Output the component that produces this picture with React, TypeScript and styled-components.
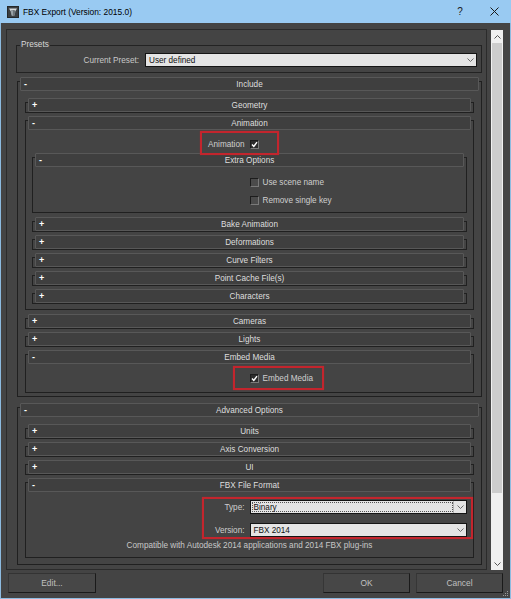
import React from 'react';
import styled, { createGlobalStyle } from 'styled-components';

const GlobalStyle = createGlobalStyle`
  * { box-sizing: border-box; }
  html, body { margin: 0; padding: 0; background: #444444; }
  body { font-family: "Liberation Sans", Arial, sans-serif; font-size: 8.2px; overflow: hidden; }
`;

const Window = styled.div`
  position: relative;
  width: 511px;
  height: 599px;
  display: flex;
  flex-direction: column;
  background: #444444;
`;

const TitleBar = styled.div`
  height: 23px;
  flex: none;
  background: #99caf2;
  display: flex;
  align-items: center;
  padding-left: 7px;
  color: #000;
  font-size: 8.4px;
`;

const TitleText = styled.span`
  margin-left: 4px;
  flex: 1;
`;

const TitleBtn = styled.div<{ $mr: number }>`
  width: 28px;
  height: 23px;
  margin-right: ${(p) => p.$mr}px;
  display: flex;
  align-items: center;
  justify-content: center;
  font-size: 10px;
  color: #1a1a1a;
`;

const Client = styled.div`
  flex: 1;
  display: flex;
  flex-direction: column;
  border: 1px solid #8dbbe0;
  border-top: none;
  padding: 6px 7px 0 5px;
`;

const MainRow = styled.div`
  display: flex;
  align-items: flex-start;
  height: 541px;
`;

const ScrollPanel = styled.div`
  width: 481px;
  height: 541px;
  border: 1px solid #2b2b2b;
  padding: 0 4px 0 9px;
  display: flex;
  flex-direction: column;
  overflow: hidden;
`;

const ScrollBar = styled.div`
  width: 12px;
  height: 540px;
  margin: 1px 0 0 4px;
  background: #f0f0f0;
  display: flex;
  flex-direction: column;
`;

const ScrollArrow = styled.div`
  height: 13px;
  flex: none;
  display: flex;
  align-items: center;
  justify-content: center;
`;

const ScrollThumb = styled.div`
  height: 450px;
  flex: none;
  margin: 0 1px;
  background: #cdcdcd;
`;

const ScrollTrack = styled.div`
  flex: 1;
`;

const ButtonRow = styled.div`
  display: flex;
  margin-top: 3px;
  height: 20px;
  padding-left: 2px;
`;

const Button = styled.div<{ $w: number; $mr?: number }>`
  width: ${(p) => p.$w}px;
  margin-right: ${(p) => p.$mr ?? 0}px;
  height: 20px;
  background: #474747;
  border: 1px solid;
  border-color: #333 #1a1a1a #1a1a1a #363636;
  color: #c0c0c0;
  display: flex;
  align-items: center;
  justify-content: center;
  font-size: 8.4px;
`;

const Spacer = styled.div`
  flex: 1;
`;

const Group = styled.div`
  margin-top: 15px;
  height: 28px;
  border: 1px solid #232323;
  display: flex;
  flex-direction: column;
  flex: none;
`;

const Legend = styled.div`
  align-self: flex-start;
  margin: -6px 0 0 3px;
  padding: 0 1px;
  height: 10px;
  line-height: 10px;
  background: #444444;
  color: #d8d8d8;
`;

const PresetRow = styled.div`
  display: flex;
  align-items: center;
  margin-top: 3px;
`;

const PresetLabel = styled.div`
  width: 122px;
  margin-right: 6px;
  text-align: right;
  color: #c8c8c8;
`;

const Combo = styled.div<{ $mr?: number }>`
  flex: 1;
  height: 14px;
  margin-right: ${(p) => p.$mr ?? 0}px;
  background: #e4e4e4;
  border: 1px solid #141414;
  display: flex;
  align-items: center;
  color: #111;
  line-height: 12px;
`;

const ComboText = styled.div<{ $focus?: boolean }>`
  flex: 1;
  height: 10px;
  margin-left: 1px;
  padding-left: 1px;
  line-height: 9px;
  border: 1px dotted ${(p) => (p.$focus ? '#555' : 'transparent')};
`;

const ComboButton = styled.div<{ $split?: boolean }>`
  width: 13px;
  height: 12px;
  display: flex;
  align-items: center;
  justify-content: center;
  border-left: 1px solid ${(p) => (p.$split ? '#b5b5b5' : 'transparent')};
`;

const RollFrame = styled.div<{ $mt: number; $ml?: number }>`
  flex: none;
  margin-top: ${(p) => 4 + p.$mt}px;
  margin-left: ${(p) => p.$ml ?? 0}px;
  border: 1px solid #202020;
  padding: 0 2px;
`;

const RollHeader = styled.div`
  margin-top: -5px;
  height: 14px;
  background: #3f3f3f;
  border: 1px solid #585858;
  border-radius: 1px;
  display: grid;
  grid-template-columns: 14px 1fr 14px;
  align-items: center;
  color: #dedede;
  line-height: 13px;
`;

const Sign = styled.span`
  padding-left: 3px;
  color: #ffffff;
  font-weight: bold;
  font-size: 9px;
`;

const HeaderTitle = styled.span`
  text-align: center;
`;

const RollBody = styled.div<{ $pad: string }>`
  display: flex;
  flex-direction: column;
  padding: ${(p) => p.$pad};
`;

const CheckRow = styled.div<{ $mt?: number }>`
  position: relative;
  display: grid;
  grid-template-columns: 1fr 1fr;
  align-items: center;
  height: 12px;
  flex: none;
  margin-top: ${(p) => p.$mt ?? 0}px;
  color: #cfcfcf;
`;

const RowLabel = styled.div`
  text-align: right;
  padding-right: 5px;
`;

const CheckCell = styled.div`
  display: flex;
  align-items: center;
  gap: 4px;
`;

const CheckBox = styled.span<{ $on?: boolean }>`
  width: 9px;
  height: 9px;
  flex: none;
  border: 1px solid;
  border-color: #1c1c1c #7a7a7a #7a7a7a #1c1c1c;
  background: ${(p) => (p.$on ? '#2c2c2c' : '#4b4b4b')};
  display: flex;
  align-items: center;
  justify-content: center;
`;

const ComboBlock = styled.div`
  position: relative;
  display: flex;
  flex-direction: column;
  gap: 9px;
`;

const ComboRow = styled.div`
  display: grid;
  grid-template-columns: 1fr 1fr;
  align-items: center;
  color: #cfcfcf;
`;

const Note = styled.div`
  margin-top: 3px;
  height: 11px;
  line-height: 11px;
  text-align: center;
  color: #c8c8c8;
`;

const Highlight = styled.div<{ $l: string; $t: number; $w?: number; $h?: number; $r?: number; $b?: number }>`
  position: absolute;
  left: ${(p) => p.$l};
  top: ${(p) => p.$t}px;
  ${(p) => (p.$w !== undefined ? `width: ${p.$w}px;` : '')}
  ${(p) => (p.$h !== undefined ? `height: ${p.$h}px;` : '')}
  ${(p) => (p.$r !== undefined ? `right: ${p.$r}px;` : '')}
  ${(p) => (p.$b !== undefined ? `bottom: ${p.$b}px;` : '')}
  border: 2px solid #c3252d;
  box-shadow: 0 0 1px rgba(195, 37, 45, 0.6);
  pointer-events: none;
`;

const Grip = styled.div`
  position: absolute;
  right: 2px;
  bottom: 2px;
  width: 7px;
  height: 7px;
`;

const Chevron = ({ dir = 'down', color = '#6b6b6b' }: { dir?: 'up' | 'down'; color?: string }) => (
  <svg width="7" height="4" viewBox="0 0 7 4">
    <polyline
      points={dir === 'down' ? '0.5,0.5 3.5,3.5 6.5,0.5' : '0.5,3.5 3.5,0.5 6.5,3.5'}
      fill="none"
      stroke={color}
      strokeWidth="1"
    />
  </svg>
);

const Tick = () => (
  <svg width="7" height="7" viewBox="0 0 7 7">
    <polyline points="1,3.5 2.8,5.5 6,1.2" fill="none" stroke="#ffffff" strokeWidth="1.4" />
  </svg>
);

const AppIcon = () => (
  <svg width="12" height="12" viewBox="0 0 12 12">
    <rect x="0.5" y="0.5" width="11" height="11" fill="#3b3f42" stroke="#24282a" />
    <polygon points="2,2.5 10,2.5 8.5,5 6,4 3.5,5" fill="#d6dadc" />
    <polygon points="3.5,5 6,4 8.5,5 7.5,9.5 6,10 4.5,9.5" fill="#9aa2a6" />
    <polygon points="6,4 8.5,5 7.5,9.5 6,10" fill="#6c7478" />
  </svg>
);

type RollProps = {
  title: string;
  open?: boolean;
  mt?: number;
  ml?: number;
  pad?: string;
  children?: React.ReactNode;
};

function Rollout({ title, open = false, mt = 3, ml, pad = '0', children }: RollProps) {
  return (
    <RollFrame $mt={mt} $ml={ml}>
      <RollHeader>
        <Sign>{open ? '-' : '+'}</Sign>
        <HeaderTitle>{title}</HeaderTitle>
        <span />
      </RollHeader>
      {open && <RollBody $pad={pad}>{children}</RollBody>}
    </RollFrame>
  );
}

export default function App() {
  return (
    <>
      <GlobalStyle />
      <Window>
        <TitleBar>
          <AppIcon />
          <TitleText>FBX Export (Version: 2015.0)</TitleText>
          <TitleBtn $mr={6}>?</TitleBtn>
          <TitleBtn $mr={3}>
            <svg width="9" height="9" viewBox="0 0 9 9">
              <path d="M0.5 0.5 L8.5 8.5 M8.5 0.5 L0.5 8.5" stroke="#1a1a1a" strokeWidth="1" />
            </svg>
          </TitleBtn>
        </TitleBar>
        <Client>
          <MainRow>
            <ScrollPanel>
              <Group>
                <Legend>Presets</Legend>
                <PresetRow>
                  <PresetLabel>Current Preset:</PresetLabel>
                  <Combo $mr={4}>
                    <ComboText>User defined</ComboText>
                    <ComboButton>
                      <Chevron />
                    </ComboButton>
                  </Combo>
                </PresetRow>
              </Group>

              <Rollout title="Include" open mt={4} ml={1} pad="7px 5px 3px">
                <Rollout title="Geometry" mt={0} />
                <Rollout title="Animation" open pad="8px 4px 5px">
                  <CheckRow>
                    <RowLabel>Animation</RowLabel>
                    <CheckCell>
                      <CheckBox $on>
                        <Tick />
                      </CheckBox>
                    </CheckCell>
                    <Highlight $l="calc(50% - 50px)" $t={-7} $w={79} $h={24} />
                  </CheckRow>
                  <Rollout title="Extra Options" open pad="9px 0 6px">
                    <CheckRow>
                      <span />
                      <CheckCell>
                        <CheckBox />
                        Use scene name
                      </CheckCell>
                    </CheckRow>
                    <CheckRow $mt={6}>
                      <span />
                      <CheckCell>
                        <CheckBox />
                        Remove single key
                      </CheckCell>
                    </CheckRow>
                  </Rollout>
                  <Rollout title="Bake Animation" mt={4} />
                  <Rollout title="Deformations" />
                  <Rollout title="Curve Filters" />
                  <Rollout title="Point Cache File(s)" />
                  <Rollout title="Characters" />
                </Rollout>
                <Rollout title="Cameras" mt={4} />
                <Rollout title="Lights" />
                <Rollout title="Embed Media" open pad="8px 4px 8px">
                  <CheckRow>
                    <span />
                    <CheckCell>
                      <CheckBox $on>
                        <Tick />
                      </CheckBox>
                      Embed Media
                    </CheckCell>
                    <Highlight $l="calc(50% - 17px)" $t={-6} $w={91} $h={24} />
                  </CheckRow>
                </Rollout>
              </Rollout>

              <Rollout title="Advanced Options" open mt={6} ml={1} pad="7px 5px 6px">
                <Rollout title="Units" mt={0} />
                <Rollout title="Axis Conversion" />
                <Rollout title="UI" />
                <Rollout title="FBX File Format" open pad="8px 4px 6px">
                  <ComboBlock>
                    <ComboRow>
                      <RowLabel>Type:</RowLabel>
                      <Combo>
                        <ComboText $focus>Binary</ComboText>
                        <ComboButton $split>
                          <Chevron />
                        </ComboButton>
                      </Combo>
                    </ComboRow>
                    <ComboRow>
                      <RowLabel>Version:</RowLabel>
                      <Combo>
                        <ComboText>FBX 2014</ComboText>
                        <ComboButton>
                          <Chevron />
                        </ComboButton>
                      </Combo>
                    </ComboRow>
                    <Highlight $l="calc(50% - 48px)" $t={-3} $r={-6} $b={-2} />
                  </ComboBlock>
                  <Note>Compatible with Autodesk 2014 applications and 2014 FBX plug-ins</Note>
                </Rollout>
              </Rollout>
            </ScrollPanel>
            <ScrollBar>
              <ScrollArrow>
                <Chevron dir="up" color="#555" />
              </ScrollArrow>
              <ScrollThumb />
              <ScrollTrack />
              <ScrollArrow>
                <Chevron color="#555" />
              </ScrollArrow>
            </ScrollBar>
          </MainRow>
          <ButtonRow>
            <Button $w={88}>Edit...</Button>
            <Spacer />
            <Button $w={87} $mr={6}>
              OK
            </Button>
            <Button $w={87}>Cancel</Button>
          </ButtonRow>
        </Client>
        <Grip>
          <svg width="7" height="7" viewBox="0 0 7 7">
            <rect x="5" y="1" width="1" height="1" fill="#9a9a9a" />
            <rect x="3" y="3" width="1" height="1" fill="#9a9a9a" />
            <rect x="5" y="3" width="1" height="1" fill="#9a9a9a" />
            <rect x="1" y="5" width="1" height="1" fill="#9a9a9a" />
            <rect x="3" y="5" width="1" height="1" fill="#9a9a9a" />
            <rect x="5" y="5" width="1" height="1" fill="#9a9a9a" />
          </svg>
        </Grip>
      </Window>
    </>
  );
}
